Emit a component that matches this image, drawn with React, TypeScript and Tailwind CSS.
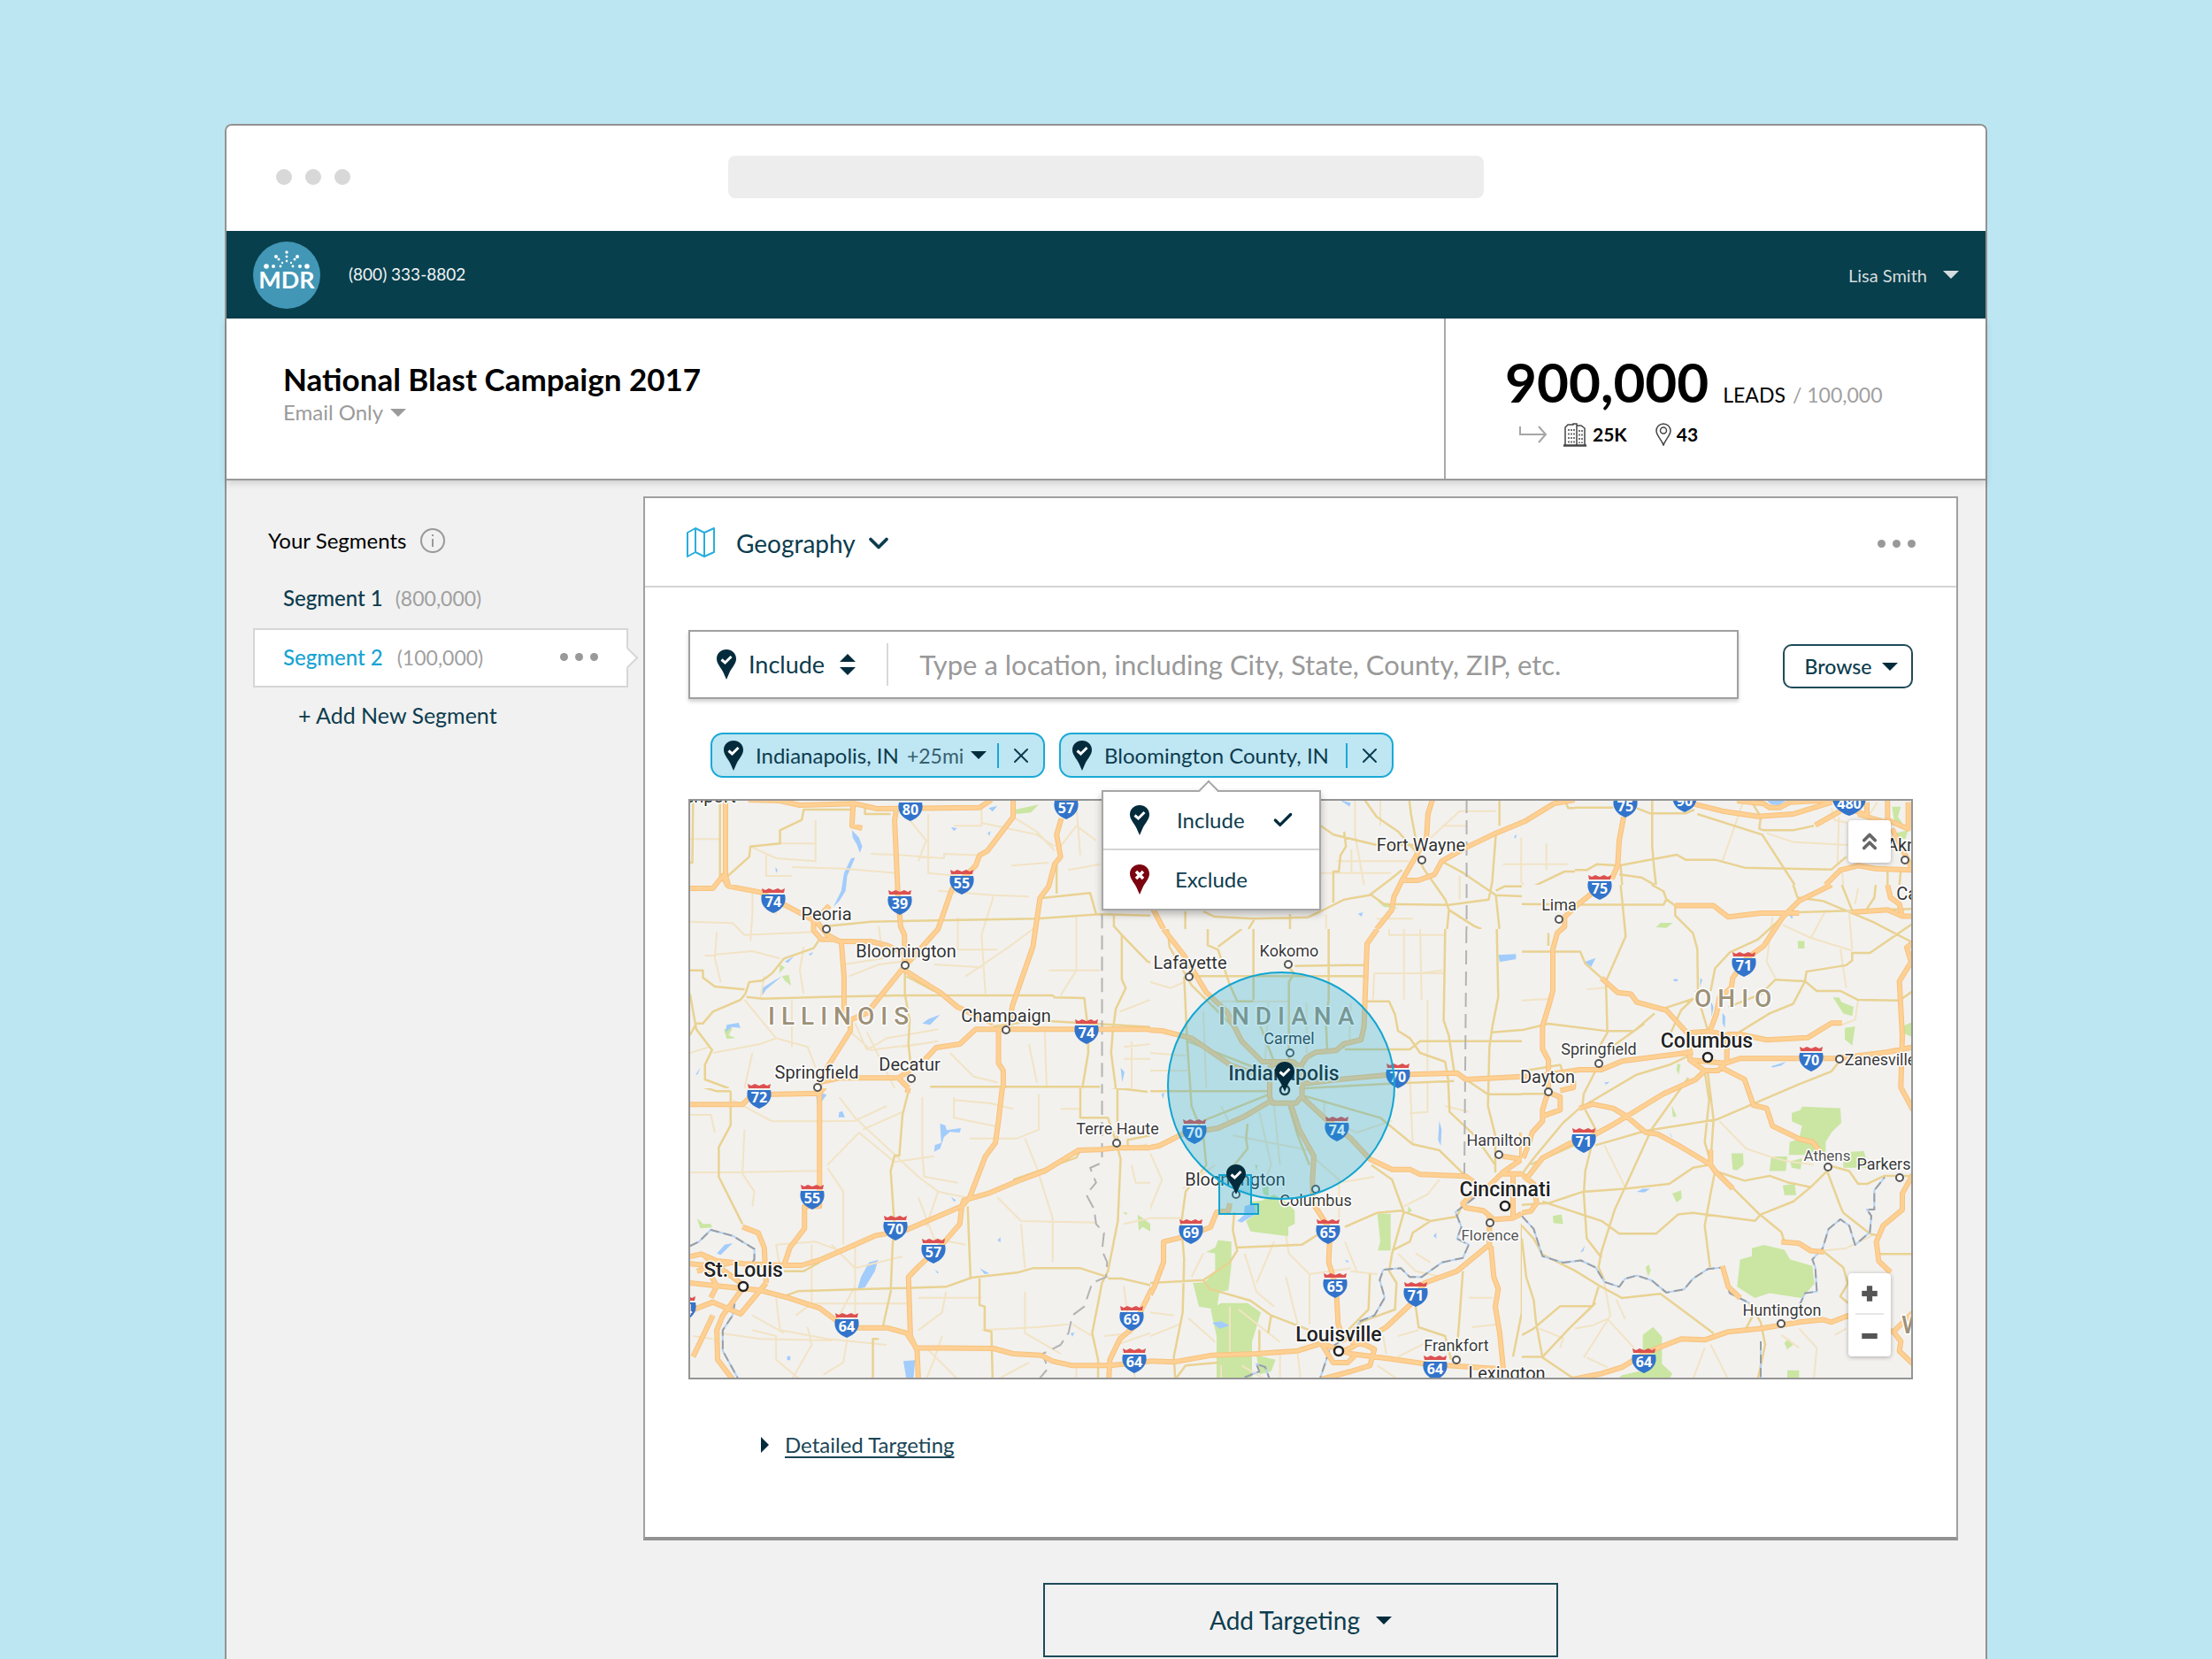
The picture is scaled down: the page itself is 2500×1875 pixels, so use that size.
import { useState } from 'react';
import type { ReactNode } from 'react';
import { Check, ChevronDown, ChevronsUp, Minus, Plus, X } from 'lucide-react';

type Mode = 'include' | 'exclude';
type LabelSize = 'sm' | 'md' | 'lg';

interface TileProps {
  x: number;
  y: number;
  width: number;
  height: number;
  viewBox: string;
  minor?: string;
  secondary?: string;
  highways?: string;
  parks?: string;
  water?: string;
  rivers?: string;
  borders?: string;
}

const SHIELDS: [string, number, number][] = [
  ['80', 1029, 914], ['57', 1205, 912], ['75', 1837, 910], ['90', 1904, 904], ['480', 2090, 907],
  ['74', 874, 1018], ['39', 1017, 1020], ['55', 1087, 997], ['75', 1808, 1003], ['71', 1971, 1090],
  ['74', 1228, 1166], ['70', 2047, 1197], ['70', 1580, 1216], ['72', 858, 1239], ['70', 1350, 1279],
  ['74', 1511, 1276], ['71', 1790, 1289], ['55', 918, 1353], ['70', 1012, 1388], ['57', 1055, 1414],
  ['69', 1346, 1392], ['65', 1501, 1392], ['65', 1509, 1453], ['71', 1600, 1463], ['64', 957, 1498],
  ['69', 1279, 1490], ['64', 1282, 1538], ['64', 1622, 1546], ['64', 1858, 1538], ['44', 773, 1479]
];

const LABEL_CLASSES: Record<LabelSize, string> = {
  sm: 'fill-[#555] text-[17px]',
  md: 'fill-[#3a3a3a] text-[18px]',
  lg: 'fill-[#333] text-[20px]'
};

// name, text centre, baseline, dot x, dot y, size
const TOWNS: [string, number, number, number, number, LabelSize][] = [
  ['Peoria', 934, 1040, 934, 1050, 'lg'],
  ['Bloomington', 1024, 1082, 1023, 1091, 'lg'],
  ['Champaign', 1137, 1155, 1137, 1164, 'lg'],
  ['Decatur', 1028, 1210, 1030, 1219, 'lg'],
  ['Springfield', 923, 1219, 924, 1229, 'lg'],
  ['Lafayette', 1345, 1095, 1344, 1104, 'lg'],
  ['Kokomo', 1457, 1081, 1456, 1090, 'md'],
  ['Carmel', 1457, 1180, 1458, 1190, 'md'],
  ['Bloomington', 1396, 1340, 1397, 1350, 'lg'],
  ['Columbus', 1487, 1363, 1487, 1344, 'md'],
  ['Terre Haute', 1263, 1282, 1262, 1292, 'md'],
  ['Fort Wayne', 1606, 962, 1607, 972, 'lg'],
  ['Lima', 1762, 1029, 1762, 1039, 'md'],
  ['Springfield', 1807, 1192, 1807, 1202, 'md'],
  ['Dayton', 1749, 1224, 1750, 1234, 'lg'],
  ['Zanesville', 2125, 1204, 2079, 1197, 'md'],
  ['Hamilton', 1694, 1295, 1694, 1305, 'md'],
  ['Florence', 1684, 1402, 1684, 1382, 'sm'],
  ['Athens', 2065, 1312, 2066, 1319, 'sm'],
  ['Parkersburg', 2147, 1322, 2147, 1331, 'md'],
  ['Frankfort', 1646, 1527, 1646, 1537, 'md'],
  ['Huntington', 2014, 1487, 2013, 1496, 'md'],
  ['Akron', 2158, 962, 2153, 972, 'lg'],
  ['Canton', 2175, 1017, 2180, 1030, 'lg']
];

const CITIES: [string, number, number, number, number][] = [
  ['Indianapolis', 1451, 1221, 1452, 1232],
  ['Columbus', 1929, 1184, 1930, 1195],
  ['Cincinnati', 1701, 1352, 1701, 1363],
  ['St. Louis', 840, 1443, 840, 1454],
  ['Louisville', 1513, 1516, 1513, 1527]
];

const STATES: [string, number, number][] = [
  ['ILLINOIS', 868, 1158],
  ['INDIANA', 1377, 1158],
  ['OHIO', 1915, 1138],
  ['WEST', 2149, 1507]
];

function Triangle({ className }: { className?: string }) {
  return (
    <svg viewBox="0 0 18 9" className={`pointer-events-none h-[9px] w-[18px] shrink-0 fill-current ${className ?? ''}`} aria-hidden="true">
      <path d="M0 0H18L9 9Z" />
    </svg>
  );
}

function PinShape({ mode }: { mode: Mode }) {
  return (
    <>
      <path
        d="M11 0C4.900 0 0 4.600 0 10.500C0 16 4.500 20 7.500 26L11 34L14.500 26C17.500 20 22 16 22 10.500C22 4.600 17.100 0 11 0Z"
        fill={mode === 'include' ? '#032b3c' : '#7b0310'}
      />
      {mode === 'include' ? (
        <path d="M5.500 11.500L9.500 15L16.500 8" fill="none" stroke="#fff" strokeWidth="3" />
      ) : (
        <path d="M7 8L15 16M15 8L7 16" fill="none" stroke="#fff" strokeWidth="3.500" />
      )}
    </>
  );
}

function Pin({ mode = 'include' }: { mode?: Mode }) {
  return (
    <svg viewBox="0 0 22 34" className="h-[34px] w-[22px] shrink-0" aria-hidden="true">
      <PinShape mode={mode} />
    </svg>
  );
}

function Dots({ label }: { label: string }) {
  return (
    <button type="button" aria-label={label} className="flex gap-2">
      <span className="size-[9px] rounded-full bg-[#999]" />
      <span className="size-[9px] rounded-full bg-[#999]" />
      <span className="size-[9px] rounded-full bg-[#999]" />
    </button>
  );
}

function Logo() {
  const dots = [
    [12, 0, 1.5], [17, 0, 1.3], [22, 0, 1.2],
    [17, 12, 2], [20, 9, 1.5], [24, 5, 1.2],
    [28, 23, 2.8], [28, 15, 2], [28, 7, 1.4]
  ];
  return (
    <svg viewBox="0 0 76 76" className="size-[76px]" role="img" aria-label="MDR">
      <circle cx="38" cy="38" r="38" fill="#4297b6" />
      {dots.map(([y, dx, r]) => (
        <g key={`${y}-${dx}`} fill="#fff">
          <circle cx={38 - dx} cy={y} r={r} />
          <circle cx={38 + dx} cy={y} r={r} />
        </g>
      ))}
      <text x="38" y="53" textAnchor="middle" className="fill-white text-[27px] font-bold">MDR</text>
    </svg>
  );
}

function Tile({ x, y, width, height, viewBox, minor, secondary, highways, parks, water, rivers, borders }: TileProps) {
  return (
    <svg x={x} y={y} width={width} height={height} viewBox={viewBox} preserveAspectRatio="none" fill="none" strokeLinejoin="round">
      <rect x="-100" y="-100" width="3000" height="3000" fill="#f2f1ee" />
      <path d={parks} fill="#cae6a2" />
      <path d={water} fill="#a2ccfb" />
      <path d={minor} stroke="#f2e3c4" strokeWidth="2" vectorEffect="non-scaling-stroke" />
      <path d={secondary} stroke="#e9d292" strokeWidth="2.500" vectorEffect="non-scaling-stroke" />
      <path d={rivers} stroke="#b5d2f2" strokeWidth="2" vectorEffect="non-scaling-stroke" />
      <path d={rivers} stroke="#9a9fa5" strokeWidth="2" strokeDasharray="10 5" vectorEffect="non-scaling-stroke" />
      <path d={borders} stroke="#b3b3b3" strokeWidth="2" strokeDasharray="16 8" vectorEffect="non-scaling-stroke" />
      <path d={highways} stroke="#f7c27e" strokeWidth="6" vectorEffect="non-scaling-stroke" />
      <path d={highways} stroke="#fed093" strokeWidth="4" vectorEffect="non-scaling-stroke" />
    </svg>
  );
}

function Shield({ label, x, y }: { label: string; x: number; y: number }) {
  return (
    <g transform={`translate(${x} ${y})`} strokeLinejoin="round">
      <path
        d={label.length > 2
          ? 'M-18 -7H18C21 2 12 11 0 15C-12 11 -21 2 -18 -7Z'
          : 'M-13 -7H13C15.500 3 10 10 0 14C-10 10 -15.500 3 -13 -7Z'}
        fill="#3274cb"
      />
      <path d="M-12 -9L-13 -14L-9 -12L-5 -14L0 -12L5 -14L9 -12L13 -14L12 -9Z" fill="#dd5050" />
      <text y="7" textAnchor="middle" className="fill-white font-['Open_Sans',sans-serif] text-[16px] font-bold">{label}</text>
    </g>
  );
}

function TargetMap() {
  return (
    <svg viewBox="780 905 1380 652" className="block h-auto w-full font-[Roboto,sans-serif]" role="img" aria-label="Map of targeted locations">
      {/* Western Illinois, top */}
      <Tile
        x={778} y={903} width={522} height={327} viewBox="18 39 1169 981"
        highways="M170 42L250 45L300 60L440 55L495 72L755 68L785 42M112 42V300L120 335L200 355L300 425L335 450V485L355 515H385L400 522H480L520 535L560 560M22 342H80L105 300L118 335M435 55L432 130L458 138M545 72L540 110L548 350L555 470L565 500V620M840 42V100L775 215L755 230L745 265L685 345L650 480L560 615L470 765L425 790M405 522L412 640V760L428 800V825L350 990V1020M962 105L950 160L960 235L945 260L930 335L908 375L890 540L838 740L830 810M560 615L655 695L700 745L790 800M615 925L645 882L705 870L745 820H1180L1290 850M803 820V935L815 960V1020M350 1000L400 985H550L615 925M550 985L575 1020M375 400L340 450L370 500L400 522"
        secondary="M98 42V300M22 255H28L30 42M118 300L172 235L175 200L250 190V145L305 110L310 75H440M370 470L480 455L900 445L1060 430L1200 435M912 375L1035 358L1050 430M165 710L205 716L360 710L570 705H940L945 712L1020 714L1028 800M350 515L335 545L260 580L230 630L205 655L172 660L162 700L150 720L80 760L55 800H38L22 840M22 620H55V645L85 675L160 685M22 700L38 820L78 890L60 940V990L120 1020M566 620V700L578 790L575 870L580 930M1030 830V900L1015 1020M1095 430V470L1115 500V650L1125 680L1100 750L1092 830L1088 900L1100 1020M1115 500L1180 590L1200 600M630 1015H1060M950 260V360M465 72V90H530M570 640L640 690M790 810L900 790L1187 812"
        minor="M22 175H98M215 230V300H280M175 200L240 240L340 250V190H250M340 110V190M22 455L130 460L160 500L340 490M180 360V430L175 520M235 360L240 430M280 270L410 275L545 290M310 540L300 620L310 700M90 490L85 580L100 660M60 570L180 555L250 580M480 225L540 228L665 240V225L760 230M625 90V290L700 300M690 130H760V60M840 100L900 150L945 215M835 265L930 255M760 120L900 160L945 200M650 350L790 365L880 370M700 440V550H800M790 370L760 500L770 700M720 640L830 540L900 470M640 600L760 610M425 640L500 600L560 590M410 600L510 580L500 470M160 720L240 850L320 880L340 950M280 720V880M200 716L210 640M470 890L520 850L650 820M470 890L440 800M470 830L540 1020M560 880L650 860M880 870L900 1000M920 830L925 1020M680 900L740 980L800 1000M1000 440V620L960 705M930 620H1060M1050 180L1000 130L960 200M1000 60L1010 230M1060 260L980 280M1120 880L1187 870M1120 920H1187M1110 760L1187 720M1140 860V1020M22 900L70 880M80 900L200 870L240 850M180 900L160 1020M430 830L480 890L540 880L600 870M600 250L620 180L560 80"
        water="M432 145L450 170L458 200L452 222L445 195L434 170ZM430 240L440 238L420 300L416 350L400 385L385 405L405 350L412 290ZM778 70L800 62L788 82ZM683 135L698 138L690 148ZM775 155L783 148L780 164ZM205 680L235 655L255 640L215 685L205 705ZM262 590L285 572L270 595ZM322 565L334 558L328 570ZM115 805L145 798L150 815L128 812L112 830ZM610 800L625 785L655 770L630 805ZM238 270L244 280L240 290ZM36 975L48 950L42 972ZM1112 950L1122 965L1116 1000Z"
        parks="M255 640L272 635L278 672L262 655ZM108 820L130 815L120 840L138 850L115 852ZM250 600L262 610L248 630ZM845 75L905 58L885 85L848 90Z"
        borders="M1065 430V1020"
      />
      {/* St. Louis to Terre Haute */}
      <Tile
        x={778} y={1230} width={522} height={329} viewBox="18 30 1169 987"
        highways="M22 85H155L180 52L350 47L375 5M350 20V430L312 430V505L275 570L260 630M22 600L50 592L90 615L160 625L255 630H305L355 610L440 560L490 530L570 510L710 430L715 410L780 385L860 340L920 310L1005 240L1060 238L1100 232H1210M815 0L803 140L795 215L770 260L730 400L710 430L705 490L660 560L600 635L575 670L580 870L597 920L600 1017M155 500L195 520L210 570L215 690M22 690L90 700L200 715L270 740L350 775L390 815L440 842H520L570 860L595 910L790 912L840 930L910 935L940 955L990 970H1085L1190 955M215 690L150 795L80 755L22 785M160 700L105 800L90 850L92 950L130 1017M80 800L55 870L30 940M1195 700L1165 780L1145 840L1110 880L1085 950L1082 1017M22 625L60 630L90 700L75 740M60 600L150 690M550 0L575 25L572 45M40 650L130 620"
        secondary="M125 40V155L95 230V330L155 490M575 40L560 120L552 258H540L530 310L540 500L535 560L530 720L510 840M40 20L90 40H125M640 22H1060L1180 42M1010 20V130H1080L1100 210M1104 0V230L1112 270L1105 480L1080 650L1065 690L1040 860L1055 950V1017M1080 670L1010 640H890L850 655L735 672L670 703L440 712L295 718L250 740M755 675V765L768 770V850L785 855L788 1017M725 430L732 670M1080 675H1115L1195 700M500 880H485V1017M260 650H310L350 620M840 340L1000 265L1010 240M1130 230V205L1187 190"
        minor="M22 120H75L85 180M130 70L230 142H350M350 142L440 140L520 90M22 315H120L350 310M160 170L155 320L185 380L180 430M370 290L450 180L540 280L640 260M370 300L410 380V560M400 60L440 130L600 330L650 380L720 400M460 170L560 110M610 60V250L615 330L700 350M690 60V130L800 160M690 70L780 80L840 100M730 200H850L905 170V50M870 200L900 300L940 470V620M800 400L860 480L1050 485M860 490L870 640M960 100H1010M1140 290L1150 350H1187M1120 490L1187 470M1180 220L1120 240M600 400L640 540L720 560M650 380L620 500M250 640L240 560L340 550L400 580M330 560V760L290 800M440 560V840M440 700L400 800M330 760H570M600 740H760M240 740L250 850L370 880L520 900M600 850L660 790L670 720M620 910L700 1017M760 850L900 840L980 830M870 720V860L960 930M990 830L1040 870M1070 870L1140 860M1120 700L1130 800M1100 900L1187 860M180 850L240 870V950L300 1017M320 840L330 900L280 1017M420 880L410 960L360 1000M660 870L640 950L620 1017M800 1017L880 960M100 860L200 880L380 885M30 870L80 880M1000 970V1017M1140 960L1150 1017M180 800L260 860M380 560L440 640L560 600"
        water="M475 620L498 612L490 650L465 705L446 710L455 670ZM400 110L408 108L414 128H398ZM655 150L668 155L672 172L708 165L705 180L680 178L665 195L655 235L640 245L642 222L658 215ZM683 398L696 410L690 414ZM800 545L808 535V552ZM755 640L780 658L768 660ZM642 645L652 655L648 658ZM425 450L435 462ZM562 955L592 952L588 1010L570 1017ZM985 860L995 858L990 872ZM268 938H276V952H268ZM340 40L368 52L345 95ZM90 590L110 560L130 555L100 595Z"
        parks="M40 470L55 490L75 490L78 502L48 505ZM1118 450L1130 452L1125 460ZM1155 458L1168 470L1187 490V515L1168 500L1158 512Z"
        rivers="M22 565L45 550L75 510L130 530L185 575V610L165 650M135 760L130 800L105 850V920L145 1017"
        borders="M1065 0V265L1060 285L1035 300L1050 350L1025 390L1045 440L1050 490L1070 520L1065 580L1078 620L1075 670L1040 690L1020 770L990 800L980 860L960 900L915 930L928 980L905 1017"
      />
      {/* Northern Indiana */}
      <Tile
        x={1300} y={903} width={480} height={147} viewBox="343 609 1176 441"
        highways="M350 980L380 1050M1125 609L1112 660L1108 740L1085 790L1040 885L1018 940L1012 985L970 1050M1040 885H1085L1130 865L1150 820L1215 775L1300 725L1380 685L1460 625L1519 612M1519 965L1490 1000L1480 1050"
        secondary="M935 609L970 670L1030 720L1080 790L1100 845L1160 950L1170 985L1165 1050M815 700L850 730L970 765H1075M880 720L885 770L870 800L865 855H850V960M815 990L880 950L950 935L1010 880L1040 850M950 930L990 965L1170 968L1280 950L1290 890L1300 730M1310 609V700M1490 609L1500 640H1519M1300 920L1325 905H1405L1490 855H1519M1300 935L1310 1050M1150 820L1210 860L1300 935L1390 940L1430 965H1519M440 990V1050M490 990L520 1008L630 1015L780 1010L815 990M630 1020L615 1050M730 1000V1050M1060 609L1065 660L1085 790M1170 985L1240 1040L1260 1050"
        minor="M910 609V730L935 900M980 609V700M815 860H1010M860 820H1060M1120 740L1200 650H1300M1150 700H1220M1320 830H1500M1370 740V890L1400 940M1440 760V850M970 1015H1070M900 780V860M830 1000V1050M1200 870V950"
        water="M868 612L898 622L895 635ZM1350 735L1358 730L1354 745ZM918 998L932 993L928 1008ZM790 1036L804 1042Z"
        parks="M972 955L1005 965L1030 980L990 975Z"
        borders="M1219 609V1050"
      />
      {/* Indiana and Cincinnati */}
      <Tile
        x={1300} y={1050} width={420} height={509} viewBox="60 0 1260 1527"
        highways="M105 0L175 90L250 215L320 280L370 380L440 450H520M60 343L100 345L200 370L330 460L440 500M830 0L795 50L785 330L775 375L715 390L690 412L620 418L590 435L570 465M465 470V570L475 590H555L575 565V475L545 450H490ZM575 525L700 510L860 495L1100 488L1130 510L1320 500M575 570L650 640L740 710L805 780L880 815H940L975 832L1130 838L1160 860M60 740L90 735L170 695L290 675L380 635L465 585M535 590L565 680L615 770L610 850L612 930L670 1020L665 1130L690 1210L697 1340L720 1400M1320 690V780L1255 825L1210 870L1160 890L1120 930L1130 945L1190 955L1225 985L1290 980L1320 965M1245 830H1320M1290 830V985M1255 770L1320 780M1210 975V1070L1100 1160L990 1200L940 1275L860 1350L740 1420L690 1440M1215 1075L1225 1180L1240 1220L1230 1280L1245 1370L1258 1500M60 1465L140 1468L270 1445L420 1440L560 1430L640 1405L740 1440L880 1458L1000 1475L1230 1490L1260 1500M640 1405L680 1470H730L760 1440M740 1400L790 1410L820 1425L805 1480L740 1500L640 1527M330 930L325 955L285 960L265 1010L190 1040L105 1060V1130L75 1210L60 1240"
        secondary="M120 0L125 60L200 190L340 330M175 160L185 380L200 600L240 700L250 800L180 890L165 1000L175 1120L170 1300L140 1450L145 1527M215 160H785M550 125L785 122M530 130L548 150L530 180V450M410 0V240M255 0V55L290 70L330 190L355 245H410M290 60L370 0M665 0V240L655 300L660 410M430 320L480 450M790 245H870L890 290L900 345L940 370L975 420L1060 450L1070 510L1075 620L1160 700L1230 800M720 408H940L975 380H1320M1060 0L1055 310L1072 360L1090 480M1235 0L1240 230L1220 330L1210 400L1205 600L1230 700V825M1220 350L1320 342M60 550H460M580 540L860 525L1090 515M580 565L840 640L950 730L1040 750L1130 838M1130 510L1205 560H1320M530 600L560 700L600 800M810 800L880 850L920 960L880 1100L870 1160L895 1200L890 1290L780 1330L700 1400M720 1010L830 962L910 955L1010 990L1100 975L1120 930M630 1035L575 1070L350 1080M345 960L340 1020L355 1090L330 1130L240 1190L60 1200M240 1190L260 1220L400 1260L470 1310L600 1360L650 1400M390 660L385 710L390 745L345 800L350 870M1010 990L950 1030L940 1060L880 1090M805 1170L800 1290L730 1360M1120 1160L1110 1300L1100 1420M960 1280L970 1350L1060 1380L1080 1460M145 1527L180 1480L290 1470M430 1360V1440M470 1310L460 1370M240 650L465 560M185 380L440 480M620 420L720 400M1320 1000V1300L1290 1450"
        minor="M60 480H185M60 420L180 430M60 180L130 200L175 180M820 150H1060M820 150L815 240M870 0V20H1060M920 0V240M975 0L980 240M975 150L1050 140M1000 240V480M940 500L950 730M1000 520V620L940 625M300 245H530M240 280L250 540M300 600L330 660M430 620L470 800L450 850M480 600L500 800M340 700L600 750M650 580V640L760 690L880 650M620 780L700 850V980M740 250L735 390M460 250L450 440M590 250V420M60 760L100 850L50 970M60 980H165M170 880L280 800M520 1040L530 1100L600 1170L740 1150M240 1100L200 1180M420 1200L480 1060M380 1100L420 1230L480 1280M740 1160L830 1170M520 1180L560 1340M600 1170V1340M360 1290L500 1400M330 1280V1440M60 1380L160 1340M60 1300L140 1310M190 1320L280 1400M300 1480V1527M370 1480L450 1527M500 1440V1527M560 1440L570 1527M900 1100L960 1160L1050 1180M960 1100L1010 1130M830 1480L900 1527M900 1380L970 1360M1000 1400L900 1450M1140 1250H1220M1150 1350L1240 1340M1040 850L1000 900L920 940M1060 600L1140 620M700 860L820 840M850 1380L860 1440M720 1060L760 1160"
        water="M1240 88L1300 85V102L1245 112ZM380 940L410 930L420 965L370 995L355 990L378 970ZM1040 650L1048 680L1045 735L1036 715ZM1020 1040L1030 1030V1050ZM720 1122L734 1126L728 1132ZM270 1335L300 1330L330 1345L295 1355ZM98 560L108 555L104 575ZM908 325L914 345ZM650 15L662 5Z"
        parks="M290 1055L335 1060V1140L325 1225L295 1230L285 1290L225 1280L205 1200L245 1198L280 1160V1100L250 1095L280 1080ZM300 1268H390L435 1300L405 1400V1527H285V1380L265 1290ZM395 925L440 920L480 900L520 925L550 955V1000L528 1010V1042L400 1025L385 990L420 965ZM830 965H875V1090H832L840 1060ZM420 1445L485 1460L470 1500L430 1510ZM415 800H425L420 820ZM935 940L948 955L932 965ZM440 880L460 870L462 905L445 900Z"
        rivers="M1160 910L1095 960L1115 1010L1100 1050L1140 1070L1120 1115L1050 1130L980 1180L940 1180L910 1150L850 1155L838 1190L855 1250L820 1310L770 1330L750 1370L670 1420L635 1527M380 1520L430 1500L420 1475L450 1485L465 1527"
        borders="M1132 0L1125 835"
      />
      {/* Ohio */}
      <Tile
        x={1720} y={1000} width={442} height={559} viewBox="60 0 1326 1538"
        highways="M320 10L245 65L205 100V130L180 150L165 200V330L150 380L130 440V510L150 545V640L130 700V735L95 770L85 800L65 850M60 597L130 592L255 575L330 575L400 548L640 520M630 545L750 555L800 540H1130L1300 520L1386 505M1110 0L1000 50L945 100L880 190L820 230L775 290L770 320L730 350L720 400L700 450M580 65L655 65H710L760 100L870 88H1000M1180 85L1300 78L1350 98H1386M1386 180L1365 195L1380 240L1340 300L1350 470L1345 630L1386 700M330 290L385 335L430 340L450 365L510 380L550 390L620 460M625 460L630 545L680 578H725L755 550V470L700 455ZM755 465H800L890 482L1030 475L1110 430L1145 430M740 570L815 605L845 685L890 695L910 750L1000 790L1045 800L1090 850M680 578L650 605L540 650L415 720L370 745L300 780L220 805L130 850L70 920M150 645L190 660V700L130 720M190 640L235 630V610M255 695L300 682L370 695L415 720L480 770L520 775L600 815L700 870L715 890L775 945M700 825V870M60 900L100 930L110 990L90 1015L60 1020M740 1185L760 1250L800 1285M940 1110L1000 1115L1040 1138L1085 1142M1386 900L1350 960V1010L1285 1060L1262 1110L1270 1170L1310 1205M1386 1330L1320 1390L1345 1420L1340 1450L1386 1490M230 1538L330 1520L400 1500L480 1455L600 1412L680 1415L760 1390L870 1380L1000 1360L1080 1352L1110 1360L1165 1340L1320 1390M1300 0L1310 40L1340 60L1350 98"
        secondary="M395 0L412 160L345 300L350 460L325 500M60 60L245 62H540L550 45M500 0L540 20L550 45L580 65V95L640 150L655 200L657 330M60 208H258L275 245L330 290M60 452L150 432L350 455L440 455L510 400M475 432L340 520M560 470L600 390L640 355L540 385M785 465L900 400L980 370L1020 300L1060 330H1140L1200 358L1340 360L1386 330M1020 300L920 295L870 340L760 380M1020 300L1025 270L1160 250L1180 235V212H1240L1386 120M945 100L860 170L765 210L715 260L700 330M980 0L995 40L1080 50L1250 115L1386 180M1145 0L1180 80M1260 0L1255 40L1230 75M1000 85L1386 75M60 650H140M265 690L270 650L320 560M265 690L450 590L560 560L640 525M255 695L200 740L100 850L60 900M275 700L310 760L275 890L270 960L280 1100L330 1160M310 810L480 765L720 730L1000 620L1110 580L1140 545M625 600L500 760L410 940L375 1010L330 1140L320 1190L340 1230M690 580L710 730L700 860L715 890L700 960L680 1060L698 1190M680 580L695 670L680 800L700 860M130 985L330 1045L390 1085H515L590 1025L640 1020L850 1045L870 1025L980 985L1040 940L1095 890M60 995L150 990L265 955L410 945L560 930L640 880L700 870M715 890L815 920L900 905L960 925L1040 940M740 910L860 1020L940 1080L950 1110M1095 890L1140 1000L1150 1020L1240 1085L1265 1090M1110 875L1170 890L1200 930H1230L1290 905H1386M1270 1148H1386M1085 1142L1150 1190L1165 1240L1140 1280L1165 1300M60 1060L100 1100L130 1150L240 1200L320 1245L400 1285L530 1272L630 1340L710 1395M60 1100L75 1220L100 1290L108 1360L130 1470L240 1538M320 1250L300 1310H190L100 1380L60 1400M60 1468H130L220 1380L310 1300M830 1300L870 1360L885 1430L860 1538M860 1310L820 1380M650 330L680 420L690 450M150 190L150 150M200 585L190 560L60 580M90 870L260 800"
        minor="M60 360L150 355L160 340M280 325L345 320M910 100L890 240L920 290M945 125L1040 165L1180 205M1040 165L1090 80M1170 90L1180 200M1140 200L1160 320M1200 360L1190 420L1145 435M340 810L410 940M730 735L820 820L900 845L960 860L1050 870M240 1380L300 1370L350 1350L440 1440M340 1240L360 1340L270 1470M280 1470L350 1500M120 1380L200 1410L190 1440M1060 1140L1160 1130L1250 1090M1000 1380L1060 1440L1050 1538M940 1400L1000 1440M680 1440L640 1538M700 1430L760 1538M380 1290L410 1350M1200 10L1190 60M1120 1400L1160 1380"
        water="M60 215V238L45 225ZM272 240L310 228L295 255ZM964 90L980 100L975 106ZM845 120L860 128ZM905 565L955 550L940 562L910 568ZM450 955L470 945H495L475 957ZM258 1143L274 1122L268 1140ZM560 765L572 790L565 780ZM740 398L750 410L748 445L740 430ZM700 360L710 380L704 410ZM665 290L672 295L664 318ZM575 293H588V300H575ZM340 615L358 612L345 622Z"
        parks="M1010 690L1140 695L1143 740L1110 770L1090 800V850L1050 840H965L968 800L1000 790L1010 750L975 735V710L1005 700ZM905 845H960L955 890H900ZM770 835H810L812 870L790 888L775 885ZM1175 830L1220 828L1235 880H1150V860L1175 855ZM945 935L985 930L990 965H950ZM840 1130L880 1120L950 1135L970 1165L1045 1185L1052 1240L1010 1285L900 1270L850 1285L790 1250L800 1165L840 1155ZM470 1400L505 1375L535 1405V1490L570 1520L560 1538H380L400 1525L470 1510ZM1115 350H1135L1145 365L1185 380L1180 408L1150 400ZM1155 445L1190 440L1180 500L1155 480ZM515 132L530 118H572L550 134ZM995 175H1018V198H997ZM165 1030L195 1025L200 1055L167 1052ZM570 960L600 950L602 975L585 988ZM960 1510H1000V1538H960ZM950 1425L965 1410L980 1430L960 1445ZM568 685L585 720L572 722ZM588 555L598 560L592 590L584 575ZM970 860L1010 850L1005 885L975 880ZM1350 440L1386 425V475L1352 460ZM480 1190L490 1180L497 1200L488 1218Z"
        rivers="M60 1030L100 1070L130 1155L200 1175L260 1168L310 1190L340 1235L390 1250L410 1225L450 1215L500 1230L550 1268L610 1258L640 1225L690 1195L740 1190L765 1270L830 1300M1000 1310L1020 1270L1060 1265L1055 1190L1045 1165L1080 1130L1100 1070L1140 1040L1170 1060L1190 1120L1240 1080L1245 1030L1230 1010H1255V950L1290 910M870 1420V1538"
      />
      {/* Lake Erie shore */}
      <Tile
        x={1780} y={903} width={382} height={97} viewBox="0 1029 1146 291"
        highways="M400 1045L500 1070L620 1088L740 1080L870 1040M550 1035L640 1045L660 1058H695L730 1040L880 1032M165 1090L150 1170L145 1255L125 1300M900 1070L815 1118M990 1040V1085L930 1060M1060 1035V1100L1130 1130V1040M1075 1130L1146 1270M850 1320L900 1270L960 1255L1020 1265L1146 1270M960 1080L1060 1110"
        secondary="M150 1285L225 1295L270 1320M0 1058H130M210 1060L255 1078H375L405 1065M262 1029V1190L268 1260L275 1320M0 1270H40L75 1250L150 1255L345 1218L375 1235H475L575 1262L870 1268L920 1225M415 1080L635 1150L745 1320M630 1090L625 1130L640 1135H740L810 1120M600 1040L630 1090M1060 1270V1320M1105 1270L1100 1320M155 1255L160 1320"
        minor="M570 1040L500 1240M650 1145L740 1175L925 1185M895 1090L890 1250M870 1060L880 1100L925 1110M1025 1040L1000 1080M905 1270L910 1320"
        water="M645 1029H725L690 1050L665 1048Z"
        parks="M1075 1055H1105L1095 1090L1110 1110L1085 1120ZM1085 1145L1130 1135L1120 1165L1090 1160Z"
      />

      {SHIELDS.map(([label, x, y]) => (
        <Shield key={`${label}-${x}-${y}`} label={label} x={x} y={y} />
      ))}

      <g stroke="#fff" strokeWidth="3" strokeLinejoin="round" textAnchor="middle" style={{ paintOrder: 'stroke' }}>
        {TOWNS.map(([name, x, y, , , size]) => (
          <text key={`${name}-${x}`} x={x} y={y} className={LABEL_CLASSES[size]}>{name}</text>
        ))}
        {CITIES.map(([name, x, y]) => (
          <text key={`${name}-${x}`} x={x} y={y} className="fill-[#222] text-[23px] font-medium">{name}</text>
        ))}
        <text x="1703" y="1559" className="fill-[#333] text-[20px]">Lexington</text>
        <text x="786" y="907" className="fill-[#333] text-[20px]">Davenport</text>
        {STATES.map(([name, x, y]) => (
          <text key={name} x={x} y={y} textAnchor="start" className="fill-[#9d9178] text-[28px] font-medium tracking-[7px]">{name}</text>
        ))}
      </g>
      <g fill="#fff">
        {TOWNS.map(([name, , , cx, cy]) => (
          <circle key={`${name}-${cx}`} cx={cx} cy={cy} r="4" stroke="#555" strokeWidth="2" />
        ))}
        {CITIES.map(([name, , , cx, cy]) => (
          <circle key={`${name}-${cx}`} cx={cx} cy={cy} r="5" stroke="#222" strokeWidth="2.500" />
        ))}
      </g>

      {/* Targeted areas */}
      <g fill="#13a5d1" fillOpacity="0.270" stroke="#13a5d1" strokeWidth="2">
        <circle cx="1448" cy="1227" r="128" />
        <path d="M1378 1328H1414V1361H1422V1372H1378Z" />
      </g>
      <g transform="translate(1441 1200)"><PinShape mode="include" /></g>
      <g transform="translate(1386 1316)"><PinShape mode="include" /></g>
    </svg>
  );
}

function Chip({ name, children, menu }: { name: string; children?: ReactNode; menu?: ReactNode }) {
  return (
    <div className="relative flex h-[51px] w-[378px] items-center rounded-[14px] border-2 border-[#1ba9d6] bg-[#bfe6f3] pl-[13px] text-[24px] text-[#0c3c4e]">
      <Pin />
      <span className="ml-[14px] whitespace-nowrap">{name}</span>
      {children}
      <span className="ml-auto h-7 w-[2px] bg-[#1ba9d6]" />
      <button type="button" aria-label={`Remove ${name}`} className="px-[11px]">
        <X className="size-7" strokeWidth={1.7} />
      </button>
      {menu}
    </div>
  );
}

export default function App() {
  const [mode, setMode] = useState<Mode>('include');

  return (
    <div className="min-h-screen bg-[#bde6f3] px-[254px] pt-[140px] font-[Lato,sans-serif] text-[24px] leading-7 text-black">
      <div className="flex min-h-[calc(100vh-140px)] flex-col rounded-t-lg border-2 border-b-0 border-[#929292] bg-[#f1f1f1]">
        {/* Browser bar */}
        <div className="flex h-[119px] items-center rounded-t-md bg-white px-14 pb-1">
          <div className="flex flex-1 gap-[15px]">
            <span className="size-[18px] rounded-full bg-[#d8d8d8]" />
            <span className="size-[18px] rounded-full bg-[#d8d8d8]" />
            <span className="size-[18px] rounded-full bg-[#d8d8d8]" />
          </div>
          <div className="h-12 w-[854px] rounded-lg bg-[#ededed]" />
          <div className="flex-1" />
        </div>

        {/* Top navigation */}
        <nav className="flex h-[99px] items-center bg-[#083f4c] px-[30px]">
          <Logo />
          <a href="tel:8003338802" className="ml-8 pb-[2px] text-[19px] text-[#eef3f4]">(800) 333-8802</a>
          <button type="button" className="ml-auto flex items-center gap-[18px] text-[20px] text-[#d5dcde]">
            Lisa Smith
            <Triangle />
          </button>
        </nav>

        {/* Campaign header */}
        <header className="relative flex h-[183px] border-b-2 border-[#999] bg-white shadow-[0_3px_8px_rgba(0,0,0,0.15)]">
          <div className="flex-1 pt-12 pl-16">
            <h1 className="text-[35px] leading-10 font-bold">National Blast Campaign 2017</h1>
            <div className="mt-1 flex items-center text-[#9b9b9b]">
              <select aria-label="Campaign type" className="field-sizing-content appearance-none">
                <option>Email Only</option>
              </select>
              <Triangle className="ml-2" />
            </div>
          </div>
          <div className="w-[612px] border-l-2 border-[#aaa] pt-[35px] pl-[67px]">
            <p className="flex items-baseline text-[23px] text-[#a0a0a0]">
              <strong className="text-[62px] leading-[72px] font-bold text-black">900,000</strong>
              <span className="ml-4 text-black">LEADS</span>
              <span className="ml-2">/ 100,000</span>
            </p>
            <div className="mt-[10px] flex items-center pl-4 text-[21px] font-bold">
              <svg viewBox="0 0 32 20" className="h-5 w-8" fill="none" stroke="#a5a5a5" strokeWidth="2" aria-hidden="true">
                <path d="M1 1V10H30M22 1L30 10L22 19" />
              </svg>
              <svg viewBox="0 0 26 28" className="ml-[18px] h-7 w-[26px]" fill="none" stroke="#444" strokeWidth="1.500" aria-hidden="true">
                <path d="M2 26V6L5 3H11V2H15V26M15 4H20L24 7V26" />
                <path d="M0 26.500H26" strokeWidth="2.500" />
                <path d="M6 8V24M9 8V24M12 8V24M18 9V24M21 9V24" strokeDasharray="2 2.500" />
              </svg>
              <span className="ml-[7px]">25K</span>
              <svg viewBox="0 0 18 26" className="ml-8 h-[26px] w-[18px]" fill="none" stroke="#444" strokeWidth="1.500" aria-hidden="true">
                <path d="M9 1C4.500 1 1 4.500 1 9C1 14 7 19 9 25C11 19 17 14 17 9C17 4.500 13.500 1 9 1Z" />
                <circle cx="9" cy="8.500" r="3.500" />
              </svg>
              <span className="ml-[6px]">43</span>
            </div>
          </div>
        </header>

        <div className="flex flex-1 pt-[18px] pr-[31px] pl-[30px]">
          {/* Segments */}
          <aside className="mr-[17px] w-[424px] shrink-0 pt-9">
            <h2 className="flex items-center pl-[17px]">
              Your Segments
              <svg viewBox="0 0 28 28" className="ml-4 size-7" fill="none" stroke="#999" strokeWidth="2" aria-label="Info">
                <circle cx="14" cy="14" r="13" />
                <path d="M14 12V21M14 7V9" />
              </svg>
            </h2>
            <button type="button" className="mt-[17px] mb-px flex h-[67px] w-full items-center pl-[34px] text-left">
              <span className="font-medium text-[#0c3c4e]">Segment 1</span>
              <span className="ml-[14px] text-[23px] text-[#a0a0a0]">(800,000)</span>
            </button>
            <div className="relative flex h-[67px] items-center border-2 border-[#d6d6d6] bg-white pr-8 pb-[2px] pl-8">
              <button type="button" className="flex-1 text-left">
                <span className="font-medium text-[#17a4d2]">Segment 2</span>
                <span className="ml-4 text-[23px] text-[#a0a0a0]">(100,000)</span>
              </button>
              <Dots label="Segment 2 options" />
              <span className="absolute top-[23px] -right-[10px] size-[17px] rotate-45 border-t-2 border-r-2 border-[#d6d6d6] bg-white" />
            </div>
            <button type="button" className="mt-[17px] ml-[51px] text-[25px] text-[#0c3c4e]">+ Add New Segment</button>
          </aside>

          <main className="min-w-0 flex-1">
            <section className="border-2 border-b-4 border-[#a0a0a0] border-b-[#929292] bg-white pb-[88px]">
              <div className="flex h-[101px] items-center border-b-2 border-[#d4d4d4] pr-[46px] pl-[47px]">
                <svg viewBox="0 0 32 34" className="h-[34px] w-8" fill="none" stroke="#2aaedb" strokeWidth="2" strokeLinejoin="round" aria-hidden="true">
                  <path d="M1 6L10 1L20 6L31 1V28L20 33L10 28L1 33ZM10 1V28M20 6V33" />
                </svg>
                <div className="ml-6 flex items-center pt-[3px] text-[28px] text-[#0c3c4e]">
                  <select aria-label="Targeting type" className="field-sizing-content appearance-none leading-9">
                    <option>Geography</option>
                  </select>
                  <ChevronDown className="pointer-events-none ml-2 size-9" strokeWidth={2.5} />
                </div>
                <div className="ml-auto pt-1">
                  <Dots label="Geography options" />
                </div>
              </div>

              <div className="px-[49px] pt-12">
                {/* Location search */}
                <div className="flex items-center gap-[50px]">
                  <div className="flex h-[78px] min-w-0 flex-1 items-center border-2 border-[#a0a0a0] pl-[30px] shadow-[0_3px_4px_rgba(0,0,0,0.18)]">
                    <Pin mode={mode} />
                    <select
                      aria-label="Include or exclude"
                      value={mode}
                      onChange={(e) => setMode(e.target.value as Mode)}
                      className="ml-[14px] field-sizing-content appearance-none text-[27px] leading-9 text-[#0c3c4e]"
                    >
                      <option value="include">Include</option>
                      <option value="exclude">Exclude</option>
                    </select>
                    <svg viewBox="0 0 18 24" className="ml-[17px] h-6 w-[18px] fill-[#032b3c]" aria-hidden="true">
                      <path d="M0 9L9 0L18 9ZM0 15H18L9 24Z" />
                    </svg>
                    <span className="ml-[35px] h-12 w-[2px] bg-[#d8d8d8]" />
                    <input
                      type="text"
                      aria-label="Location"
                      placeholder="Type a location, including City, State, County, ZIP, etc."
                      className="ml-[35px] min-w-0 flex-1 text-[31px] leading-10 outline-none placeholder:text-[#999]"
                    />
                  </div>
                  <button type="button" className="mt-1 flex h-[50px] w-[147px] items-center justify-center gap-3 rounded-[10px] border-2 border-[#1e4a5a] pl-2 text-[23px] font-medium text-[#0c3c4e]">
                    Browse
                    <Triangle className="text-[#032b3c]" />
                  </button>
                </div>

                {/* Selected locations */}
                <div className="mt-[38px] flex gap-4 pl-[25px]">
                  <Chip name="Indianapolis, IN">
                    <select aria-label="Radius" className="ml-[9px] field-sizing-content appearance-none text-[23px] text-[#35606f]">
                      <option>+25mi</option>
                    </select>
                    <Triangle className="ml-2 text-[#032b3c]" />
                  </Chip>
                  <Chip
                    name="Bloomington County, IN"
                    menu={
                      <div role="menu" className="absolute top-[63px] left-[46px] z-10 w-[248px] border-2 border-[#a6a6a6] bg-white text-[24px] shadow-[0_4px_8px_rgba(0,0,0,0.25)]">
                        <span className="absolute -top-[10px] left-[111px] size-4 rotate-45 border-t-2 border-l-2 border-[#a6a6a6] bg-white" />
                        <button type="button" role="menuitem" className="flex h-[66px] w-full items-center border-b-2 border-[#d4d4d4] pl-[30px]">
                          <Pin />
                          <span className="ml-[31px]">Include</span>
                          <Check className="ml-auto mr-[28px] size-[26px] text-[#032b3c]" strokeWidth={3} />
                        </button>
                        <button type="button" role="menuitem" className="flex h-[66px] w-full items-center pl-[30px]">
                          <Pin mode="exclude" />
                          <span className="ml-[29px]">Exclude</span>
                        </button>
                      </div>
                    }
                  />
                </div>

                {/* Map */}
                <div className="relative mt-6 border-2 border-[#949494]">
                  <TargetMap />
                  <button type="button" aria-label="Collapse map" className="absolute top-[22px] right-[23px] flex size-12 items-center justify-center rounded-sm bg-white text-[#666] shadow-[0_1px_5px_rgba(0,0,0,0.3)]">
                    <ChevronsUp className="size-[30px]" strokeWidth={3} />
                  </button>
                  <div className="absolute right-[23px] bottom-6 flex w-12 flex-col rounded-sm bg-white px-2 text-[#555] shadow-[0_1px_5px_rgba(0,0,0,0.3)]">
                    <button type="button" aria-label="Zoom in" className="flex h-[47px] items-center justify-center border-b-2 border-[#e6e6e6]">
                      <Plus className="size-[30px]" strokeWidth={5} strokeLinecap="butt" />
                    </button>
                    <button type="button" aria-label="Zoom out" className="flex h-[47px] items-center justify-center">
                      <Minus className="size-[30px]" strokeWidth={5} strokeLinecap="butt" />
                    </button>
                  </div>
                </div>

                <a href="#detailed" className="mt-[58px] ml-[82px] inline-flex items-center text-[24px] leading-8 text-[#1a4656]">
                  <svg viewBox="0 0 9 18" className="mr-[18px] h-[18px] w-[9px] fill-[#032b3c]" aria-hidden="true">
                    <path d="M0 0L9 9L0 18Z" />
                  </svg>
                  <span className="underline decoration-2 underline-offset-4">Detailed Targeting</span>
                </a>
              </div>
            </section>

            <button type="button" className="mx-auto mt-12 flex h-[84px] w-[582px] items-center justify-center gap-[18px] border-2 border-[#1e4a5a] text-[28px] text-[#0c3c4e]">
              Add Targeting
              <Triangle className="text-[#032b3c]" />
            </button>
          </main>
        </div>
      </div>
    </div>
  );
}
